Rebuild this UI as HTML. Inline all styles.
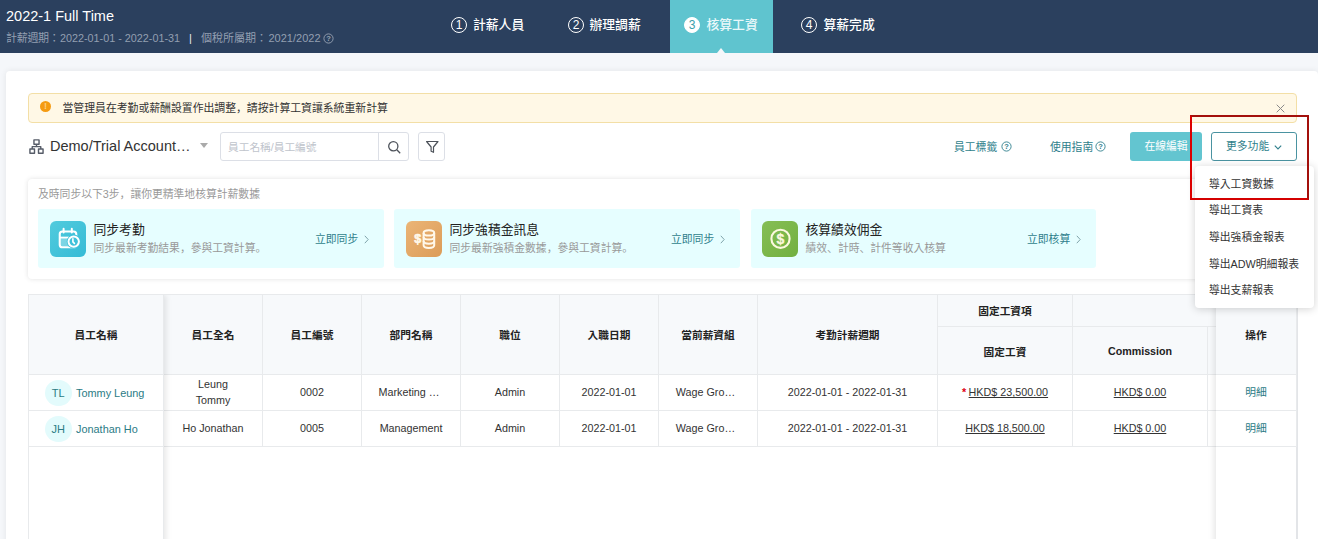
<!DOCTYPE html>
<html lang="zh-Hant">
<head>
<meta charset="utf-8">
<title>核算工資</title>
<style>
*{box-sizing:border-box;margin:0;padding:0}
html,body{width:1318px;height:539px;overflow:hidden}
body{background:#f5f7fa;font-family:"Liberation Sans","Noto Sans CJK TC",sans-serif;font-size:12px;color:#333;position:relative}
.abs{position:absolute}
#hdr{position:absolute;left:0;top:0;width:1318px;height:53px;background:#2b405e}
#hdr .t1{position:absolute;left:6px;top:8px;font-size:14.5px;color:#fff;line-height:16px;white-space:nowrap}
#hdr .t2{position:absolute;top:31px;font-size:11px;color:#939fb1;line-height:14px;white-space:nowrap}
.st{position:absolute;top:16px;font-size:12.8px;font-weight:500;line-height:18px;color:#fff;white-space:nowrap}
.num{position:absolute;top:17px;width:16px;height:16px;border:1px solid #fff;border-radius:50%;font-size:12px;line-height:14px;text-align:center;color:#fff}
.num.on{background:#fff;color:#3aa0ab}
#hdr .act{position:absolute;left:670px;top:0;width:103px;height:53px;background:#5fc4cf}
#hdr .tri{position:absolute;left:717px;top:48px;width:0;height:0;border-left:4.5px solid transparent;border-right:4.5px solid transparent;border-bottom:5px solid #f5f7fa}
.q{position:absolute;width:10px;height:10px;border:1px solid #2f7f8c;border-radius:50%;font-size:8px;line-height:8px;text-align:center;color:#2f7f8c}
#card{position:absolute;left:6px;top:71px;width:1312px;height:480px;background:#fff;border-radius:4px;box-shadow:0 0 6px rgba(0,0,0,.08)}
#alert{position:absolute;left:28px;top:93px;width:1269px;height:30px;background:#fff8e6;border:1px solid #f3dfa6;border-radius:4px}
#alert .dot{position:absolute;left:11px;top:7px;width:11px;height:11px;border-radius:50%;background:#f59b12;color:#fcd083;font-size:9px;font-weight:bold;line-height:11px;text-align:center}
#alert .tx{position:absolute;left:33.5px;top:7px;font-size:10.85px;line-height:14px;color:#333;white-space:nowrap}

#org{position:absolute;left:50px;top:137px;font-size:14.5px;line-height:18px;color:#333;white-space:nowrap}
#caret{position:absolute;left:200px;top:143px;width:0;height:0;border-left:4.5px solid transparent;border-right:4.5px solid transparent;border-top:5px solid #aaa}
#search{position:absolute;left:220px;top:132px;width:189px;height:29px;border:1px solid #dcdfe6;border-radius:3px;background:#fff}
#search .ph{position:absolute;left:7px;top:7px;font-size:10.7px;line-height:14px;color:#c0c4cc;white-space:nowrap}
#search .div{position:absolute;left:157px;top:0;width:1px;height:27px;background:#dcdfe6}
#filter{position:absolute;left:418px;top:132px;width:27px;height:29px;border:1px solid #dcdfe6;border-radius:3px;background:#fff}
.lnk{position:absolute;top:140px;font-size:10.8px;line-height:14px;color:#2f7f8c;white-space:nowrap}
#btn1{position:absolute;left:1130px;top:132px;width:72px;height:29px;background:#63c5d0;border-radius:3px;color:#fff;font-size:10.8px;line-height:29px;text-align:center}
#btn2{position:absolute;left:1211px;top:132px;width:86px;height:29px;background:#fff;border:1px solid #4a93a1;border-radius:3px;color:#2f7f8c;font-size:10.8px;line-height:27px;padding-left:14px;white-space:nowrap}
#sync{position:absolute;left:28px;top:179px;width:1269px;height:100px;background:#fff;border-radius:4px;box-shadow:0 0 5px rgba(0,0,0,.12)}
#sync .hint{position:absolute;left:10px;top:8px;font-size:10.8px;line-height:14px;color:#999;white-space:nowrap}
.sc{position:absolute;top:30px;width:346px;height:59px;background:#e6feff;border-radius:3px}
.sc .ic{position:absolute;left:12px;top:12px;width:36px;height:36px}
.sc .ti{position:absolute;left:55.5px;top:13px;font-size:12.8px;line-height:16px;color:#222;white-space:nowrap}
.sc .su{position:absolute;left:55.5px;top:32px;font-size:10.8px;line-height:14px;color:#999;white-space:nowrap}
.sc .go{position:absolute;left:277px;top:22.5px;font-size:10.8px;line-height:14px;color:#2f7f8c;white-space:nowrap}
.sc.c3>*{margin-left:-1px}
.sc .chv{position:absolute;left:326px;top:25.5px}
#menu{position:absolute;left:1195px;top:166px;width:119px;height:142px;background:#fff;border-radius:4px;box-shadow:0 1px 8px rgba(0,0,0,.18)}
#menu div{position:absolute;left:14px;font-size:10.8px;line-height:14px;color:#333;white-space:nowrap}
#red{position:absolute;left:1190px;top:115px;width:119px;height:85px;border:2px solid;border-color:#a3100c #a3100c #d40000 #dc0000}
/* table */
#tbl{position:absolute;left:28px;top:294px;width:1270px;height:260px;background:#fff;border-top:1px solid #e8eaec;overflow:hidden}
.fx{position:absolute;background:#fff}
.star{color:#e00012;margin-right:2.5px;font-weight:bold}
.th{position:absolute;background:#f7f9fb;border-right:1px solid #e8eaec;border-bottom:1px solid #e8eaec;font-weight:bold;font-size:10.7px;color:#222;display:flex;align-items:center;justify-content:center;white-space:nowrap;padding-bottom:1px}
.td{position:absolute;background:#fff;border-right:1px solid #e8eaec;border-bottom:1px solid #e8eaec;font-size:10.75px;color:#333;display:flex;align-items:center;justify-content:center;text-align:center;line-height:16px;padding-bottom:2px}
.u{text-decoration:underline;text-decoration-skip-ink:none}
.p{font-family:"Liberation Sans","Noto Sans CJK SC",sans-serif}
.av{display:inline-block;width:26.5px;height:26px;border-radius:50%;background:#e3fbfc;color:#2b7b85;font-size:11px;line-height:26px;text-align:center;margin-right:4.5px;position:relative;top:1px}
.nm{color:#2b7b85;position:relative;top:1px;font-size:10.9px}
.dt{color:#2b7b85}
</style>
</head>
<body>
<div id="hdr">
  <div class="t1">2022-1 Full Time</div>
  <div class="t2" style="left:6px;letter-spacing:-0.3px">計薪週期：</div><div class="t2" style="left:60px;font-size:10.8px">2022-01-01 - 2022-01-31</div>
  <div class="t2" style="left:189px;color:#e8ecf2">|</div>
  <div class="t2" style="left:201px">個稅所屬期：</div>
  <div class="t2" style="left:268.5px">2021/2022</div>
  <svg class="abs" style="left:322.8px;top:32.5px" width="11" height="11" viewBox="0 0 11 11"><circle cx="5.5" cy="5.5" r="4.6" fill="none" stroke="#9aa5b5" stroke-width="0.9"/><text x="5.5" y="8.2" text-anchor="middle" style="font:bold 7.5px 'Liberation Sans',sans-serif" fill="#9aa5b5">?</text></svg>
  <div class="act"></div><div class="tri"></div>
  <div class="num" style="left:451px">1</div><div class="st" style="left:473px">計薪人員</div>
  <div class="num" style="left:568px">2</div><div class="st" style="left:589.5px">辦理調薪</div>
  <div class="num on" style="left:684px">3</div><div class="st" style="left:706.5px;color:#e9f8fa">核算工資</div>
  <div class="num" style="left:801px">4</div><div class="st" style="left:823.5px">算薪完成</div>
</div>
<div id="card"></div>
<div id="alert"><svg class="abs" style="left:1246.5px;top:9.5px" width="9" height="9" viewBox="0 0 9 9" fill="none" stroke="#8a8a8a" stroke-width="1"><path d="M.7 .7L8.3 8.3M8.3 .7L.7 8.3"/></svg><div class="dot">!</div><div class="tx">當管理員在考勤或薪酬設置作出調整<span class="p" lang="zh-CN">，</span>請按計算工資讓系統重新計算</div></div>

<svg class="abs" style="left:29.3px;top:138.8px" width="15" height="15.5" viewBox="0 0 16 17" fill="none" stroke="#565c68" stroke-width="1.55" stroke-linejoin="round"><rect x="5.2" y="1" width="5.6" height="4.8"/><rect x="0.8" y="11" width="5" height="4.6"/><rect x="10.2" y="11" width="5" height="4.6"/><path d="M8 5.8V8.4M3.3 11V8.4H12.7V11"/></svg>
<div id="org">Demo/Trial Account…</div>
<div id="caret"></div>
<div id="search"><div class="ph">員工名稱/員工編號</div><div class="div"></div>
<svg class="abs" style="left:166px;top:7px" width="15" height="15" viewBox="0 0 15 15" fill="none" stroke="#4d525a" stroke-width="1.3"><circle cx="6.3" cy="6.3" r="4.6"/><path d="M9.8 9.8L13.2 13.2"/></svg></div>
<div id="filter"><svg class="abs" style="left:6px;top:7px" width="14" height="14" viewBox="0 0 14 14" fill="none" stroke="#4d525a" stroke-width="1.2" stroke-linejoin="round"><path d="M1.6 1.5H13L8.5 7V12.3L6.1 11.2V7Z"/></svg></div>
<div class="lnk" style="left:954px">員工標籤</div><svg class="abs" style="left:1000.5px;top:141px" width="11" height="11" viewBox="0 0 11 11"><circle cx="5.5" cy="5.5" r="4.6" fill="none" stroke="#2f7f8c" stroke-width="0.9"/><text x="5.5" y="8.2" text-anchor="middle" style="font:bold 7.5px 'Liberation Sans',sans-serif" fill="#2f7f8c">?</text></svg>
<div class="lnk" style="left:1050px">使用指南</div><svg class="abs" style="left:1095px;top:141px" width="11" height="11" viewBox="0 0 11 11"><circle cx="5.5" cy="5.5" r="4.6" fill="none" stroke="#2f7f8c" stroke-width="0.9"/><text x="5.5" y="8.2" text-anchor="middle" style="font:bold 7.5px 'Liberation Sans',sans-serif" fill="#2f7f8c">?</text></svg>
<div id="btn1">在線編輯</div>
<div id="btn2">更多功能<svg class="abs" style="left:61.5px;top:11.5px" width="8" height="5" viewBox="0 0 8 5" fill="none" stroke="#2f7f8c" stroke-width="1.1"><path d="M.8 .7L4 4L7.2 .7"/></svg></div>
<div id="sync">
 <div class="hint">及時同步以下3步<span class="p" lang="zh-CN">，</span>讓你更精準地核算計薪數據</div>
 <div class="sc" style="left:10px"><svg class="ic" viewBox="0 0 36 36"><defs><linearGradient id="g1" x1="0" y1="0" x2="1" y2="1"><stop offset="0" stop-color="#52cbdd"/><stop offset="1" stop-color="#35bbd6"/></linearGradient></defs><rect width="36" height="36" rx="6" fill="url(#g1)"/><rect x="10.7" y="17.4" width="8" height="8" fill="#fff" fill-opacity=".3"/><rect x="9.75" y="10.5" width="16.5" height="15.8" rx="2.6" fill="none" stroke="#fff" stroke-width="2.1"/><path d="M13.6 7.8V11.6M21.8 7.8V11.6" stroke="#fff" stroke-width="2" stroke-linecap="round"/><path d="M9.7 16.6H19" stroke="#fff" stroke-width="1.9"/><circle cx="23.7" cy="20.6" r="7" fill="#3fc1da"/><circle cx="23.7" cy="20.6" r="5.2" fill="#3fc1da" stroke="#fff" stroke-width="2"/><path d="M22.9 17.9V20.9L24.4 22.4" fill="none" stroke="#fff" stroke-width="1.6" stroke-linecap="round" stroke-linejoin="round"/></svg><div class="ti">同步考勤</div><div class="su">同步最新考勤結果<span class="p" lang="zh-CN">，</span>參與工資計算<span class="p" lang="zh-CN">。</span></div><div class="go">立即同步</div><svg class="chv" width="5" height="9" viewBox="0 0 5 9" fill="none" stroke="#7fa3aa" stroke-width="1"><path d="M.8 .8L4.2 4.5L.8 8.2"/></svg></div>
 <div class="sc" style="left:366px"><svg class="ic" viewBox="0 0 36 36"><defs><linearGradient id="g2" x1="0" y1="0" x2="1" y2="1"><stop offset="0" stop-color="#ebb577"/><stop offset="1" stop-color="#dc9c58"/></linearGradient></defs><rect width="36" height="36" rx="6" fill="url(#g2)"/><text x="11.7" y="22.4" style="font:bold 12.5px 'Liberation Sans',sans-serif" fill="#fff8ea" stroke="#fff8ea" stroke-width=".6" text-anchor="middle">$</text><g fill="none" stroke="#fff8ea" stroke-width="2"><ellipse cx="22.9" cy="11.9" rx="5.3" ry="2.6"/><path d="M17.6 11.9V24.3C17.6 25.8 19.9 26.9 22.9 26.9S28.2 25.8 28.2 24.3V11.9"/><path d="M17.6 16C17.6 17.5 19.9 18.6 22.9 18.6S28.2 17.5 28.2 16M17.6 20.1C17.6 21.6 19.9 22.7 22.9 22.7S28.2 21.6 28.2 20.1"/></g></svg><div class="ti">同步強積金訊息</div><div class="su">同步最新強積金數據<span class="p" lang="zh-CN">，</span>參與工資計算<span class="p" lang="zh-CN">。</span></div><div class="go">立即同步</div><svg class="chv" width="5" height="9" viewBox="0 0 5 9" fill="none" stroke="#7fa3aa" stroke-width="1"><path d="M.8 .8L4.2 4.5L.8 8.2"/></svg></div>
 <div class="sc c3" style="left:723px;width:345px"><svg class="ic" viewBox="0 0 36 36"><defs><linearGradient id="g3" x1="0" y1="0" x2="1" y2="1"><stop offset="0" stop-color="#86be55"/><stop offset="1" stop-color="#72b040"/></linearGradient></defs><rect width="36" height="36" rx="6" fill="url(#g3)"/><circle cx="18.5" cy="17.8" r="9.1" fill="none" stroke="#fcf8df" stroke-width="2.1"/><text x="18.5" y="22.9" style="font:bold 14px 'Liberation Sans',sans-serif" fill="#fcf8df" stroke="#fcf8df" stroke-width=".3" text-anchor="middle">$</text></svg><div class="ti">核算績效佣金</div><div class="su">績效<span class="p" lang="zh-CN">、</span>計時<span class="p" lang="zh-CN">、</span>計件等收入核算</div><div class="go">立即核算</div><svg class="chv" width="5" height="9" viewBox="0 0 5 9" fill="none" stroke="#7fa3aa" stroke-width="1"><path d="M.8 .8L4.2 4.5L.8 8.2"/></svg></div>
</div>
<div id="tbl">
<div class="th" style="left:136px;top:0px;width:99px;height:80px;">員工全名</div>
<div class="th" style="left:235px;top:0px;width:99px;height:80px;">員工編號</div>
<div class="th" style="left:334px;top:0px;width:99px;height:80px;">部門名稱</div>
<div class="th" style="left:433px;top:0px;width:99px;height:80px;">職位</div>
<div class="th" style="left:532px;top:0px;width:99px;height:80px;">入職日期</div>
<div class="th" style="left:631px;top:0px;width:99px;height:80px;">當前薪資組</div>
<div class="th" style="left:730px;top:0px;width:180px;height:80px;">考勤計薪週期</div>
<div class="th" style="left:910px;top:0px;width:135px;height:32px;">固定工資項</div>
<div class="th" style="left:910px;top:32px;width:135px;height:48px;padding:1px 0 0">固定工資</div>
<div class="th" style="left:1045px;top:0px;width:225px;height:32px;"></div>
<div class="th" style="left:1045px;top:32px;width:135px;height:48px;padding:1px 0 0">Commission</div>
<div class="th" style="left:1180px;top:32px;width:90px;height:48px;"></div>
<div class="td" style="left:136px;top:80px;width:99px;height:36px;">Leung<br>Tommy</div>
<div class="td" style="left:235px;top:80px;width:99px;height:36px;">0002</div>
<div class="td" style="left:334px;top:80px;width:99px;height:36px;"><span style="position:relative;left:-2px">Marketing …</span></div>
<div class="td" style="left:433px;top:80px;width:99px;height:36px;">Admin</div>
<div class="td" style="left:532px;top:80px;width:99px;height:36px;">2022-01-01</div>
<div class="td" style="left:631px;top:80px;width:99px;height:36px;"><span style="position:relative;left:-2.5px">Wage Gro…</span></div>
<div class="td" style="left:730px;top:80px;width:180px;height:36px;">2022-01-01 - 2022-01-31</div>
<div class="td" style="left:910px;top:80px;width:135px;height:36px;"><span class="star">*</span><span class="u">HKD$ 23,500.00</span></div>
<div class="td" style="left:1045px;top:80px;width:135px;height:36px;"><span class="u">HKD$ 0.00</span></div>
<div class="td" style="left:1180px;top:80px;width:90px;height:36px;"></div>
<div class="td" style="left:136px;top:116px;width:99px;height:36px;">Ho Jonathan</div>
<div class="td" style="left:235px;top:116px;width:99px;height:36px;">0005</div>
<div class="td" style="left:334px;top:116px;width:99px;height:36px;">Management</div>
<div class="td" style="left:433px;top:116px;width:99px;height:36px;">Admin</div>
<div class="td" style="left:532px;top:116px;width:99px;height:36px;">2022-01-01</div>
<div class="td" style="left:631px;top:116px;width:99px;height:36px;"><span style="position:relative;left:-2.5px">Wage Gro…</span></div>
<div class="td" style="left:730px;top:116px;width:180px;height:36px;">2022-01-01 - 2022-01-31</div>
<div class="td" style="left:910px;top:116px;width:135px;height:36px;"><span class="u">HKD$ 18,500.00</span></div>
<div class="td" style="left:1045px;top:116px;width:135px;height:36px;"><span class="u">HKD$ 0.00</span></div>
<div class="td" style="left:1180px;top:116px;width:90px;height:36px;"></div>
<div class="fx" style="left:0;top:0;width:136px;height:260px;box-shadow:2px 0 6px rgba(0,0,0,.10);border-left:1px solid #e8eaec;border-right:1px solid #e8eaec"></div>
<div class="th" style="left:0px;top:0px;width:136px;height:80px;border-left:1px solid #e8eaec">員工名稱</div>
<div class="td" style="left:0px;top:80px;width:136px;height:36px;border-left:1px solid #e8eaec;justify-content:flex-start;padding-left:16px"><span class="av">TL</span><span class="nm">Tommy Leung</span></div>
<div class="td" style="left:0px;top:116px;width:136px;height:36px;border-left:1px solid #e8eaec;justify-content:flex-start;padding-left:16px"><span class="av">JH</span><span class="nm">Jonathan Ho</span></div>
<div class="fx" style="left:1188px;top:0;width:82px;height:260px;box-shadow:-2px 0 6px rgba(0,0,0,.10);border-right:2px solid #e3e5e8"></div>
<div class="th" style="left:1188px;top:0px;width:81px;height:80px;">操作</div>
<div class="td" style="left:1188px;top:80px;width:81px;height:36px;"><span class="dt">明細</span></div>
<div class="td" style="left:1188px;top:116px;width:81px;height:36px;"><span class="dt">明細</span></div>
</div>
<div id="menu">
 <div style="top:11px">導入工資數據</div>
 <div style="top:37px">導出工資表</div>
 <div style="top:64px">導出強積金報表</div>
 <div style="top:91px">導出ADW明細報表</div>
 <div style="top:117px">導出支薪報表</div>
</div>
<div id="red"></div>
</body>
</html>
